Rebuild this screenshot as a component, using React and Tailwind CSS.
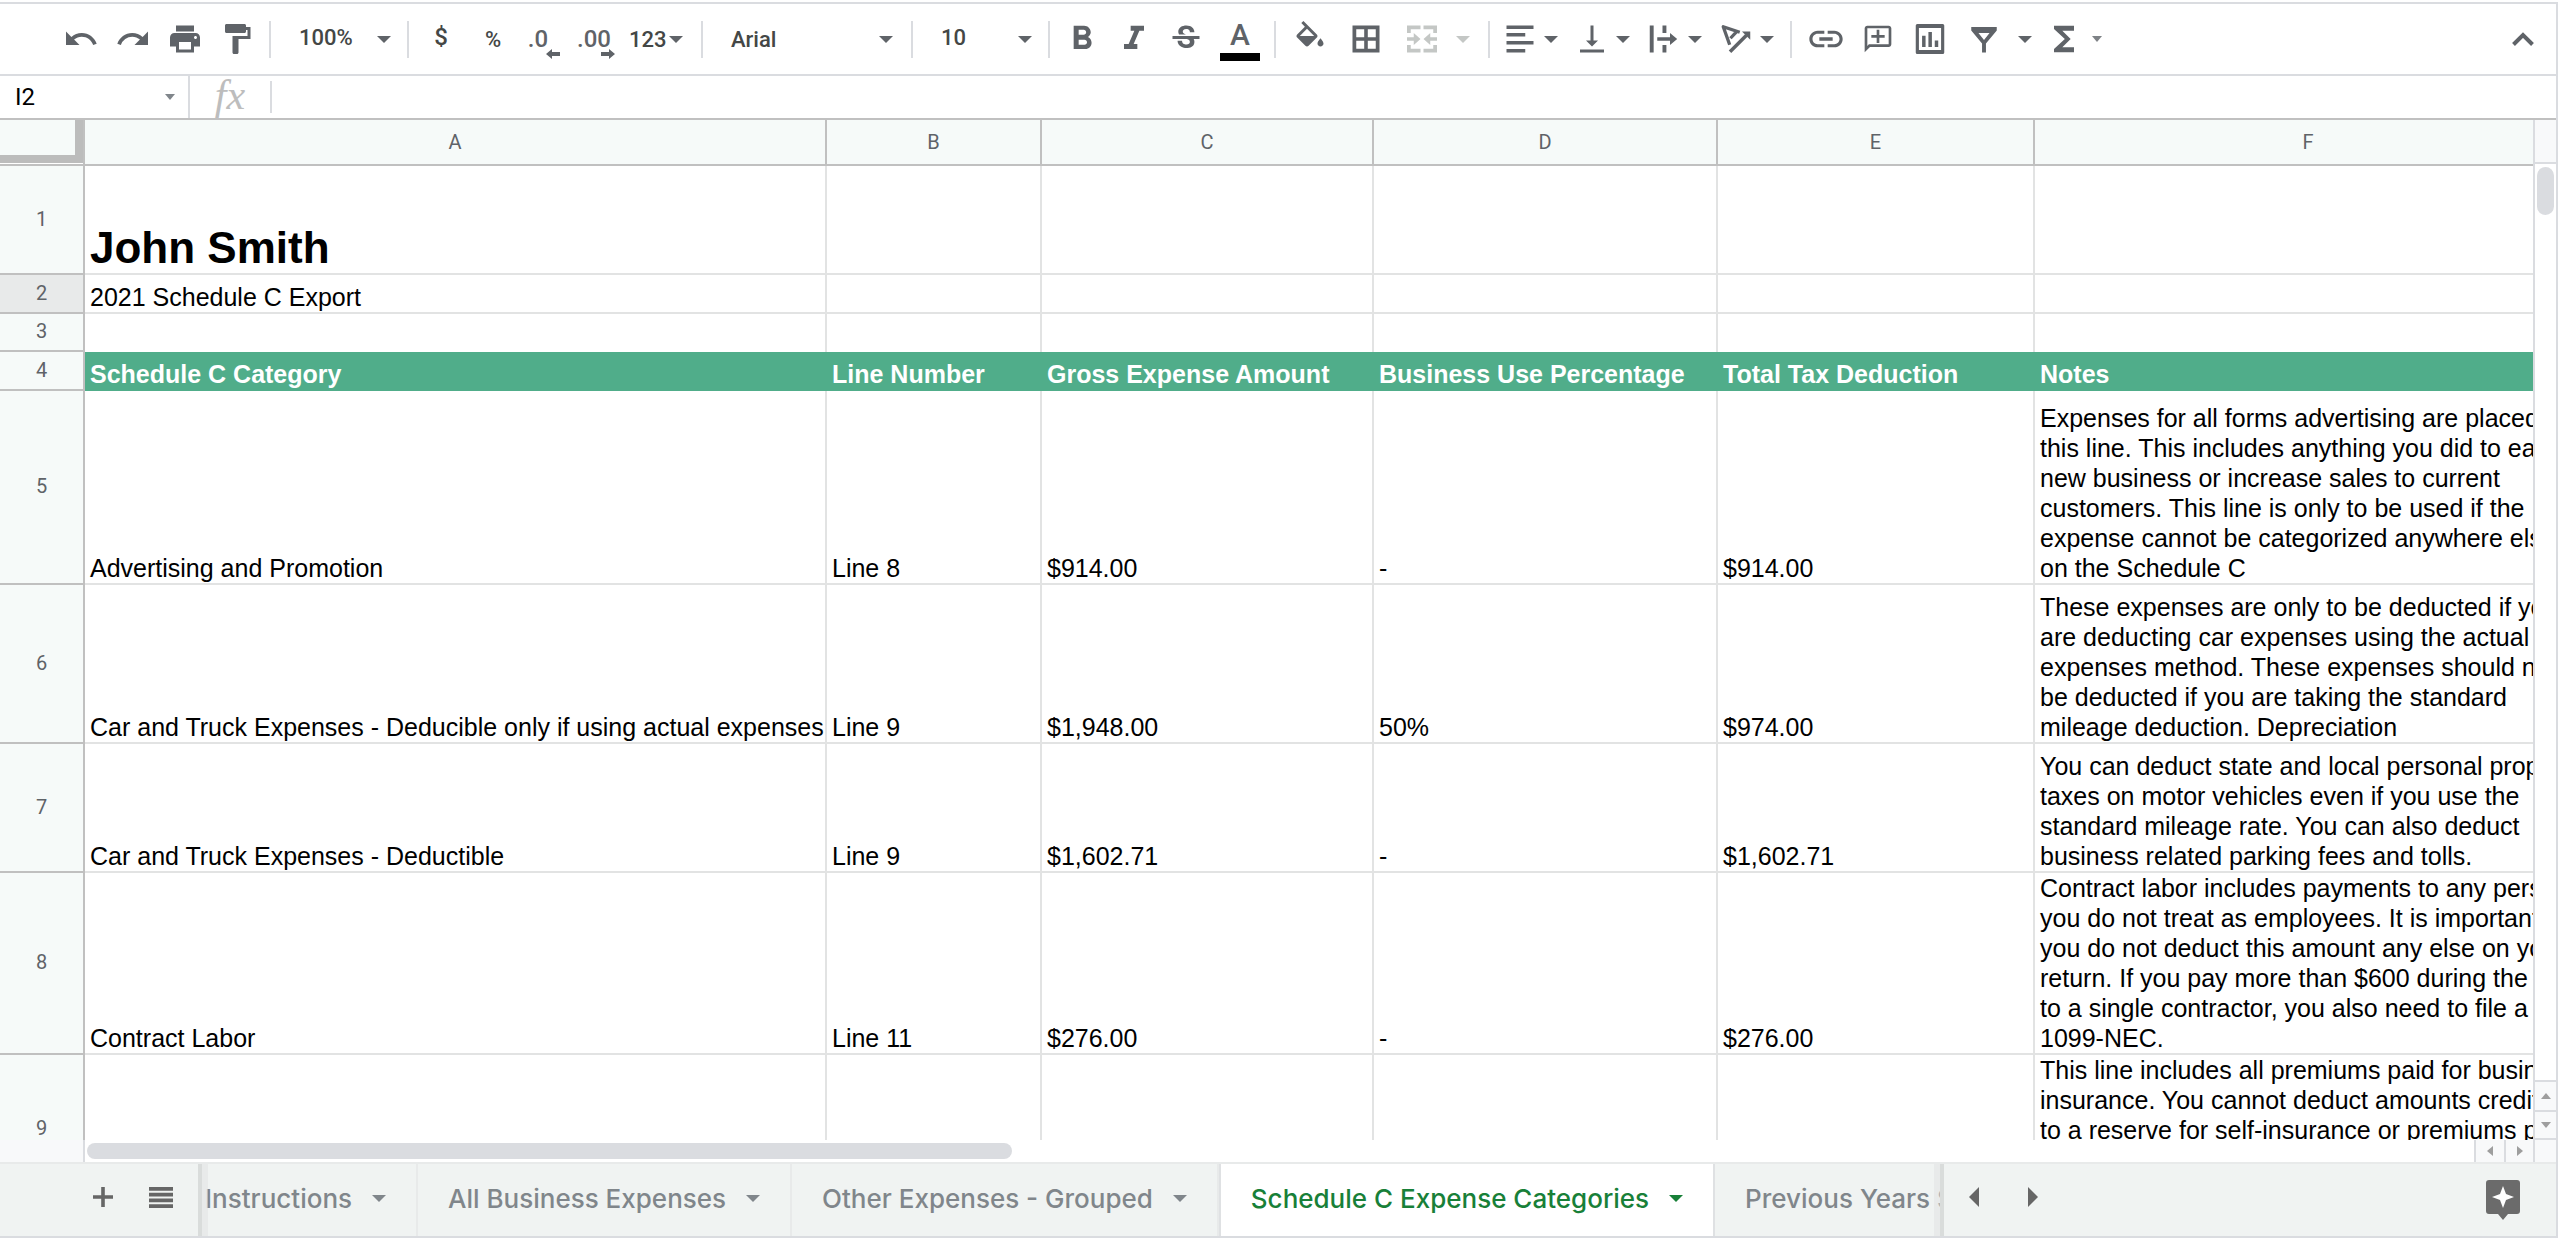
import React from 'react';
import {
    MdUndo,
    MdRedo,
    MdPrint,
    MdFormatPaint,
    MdFormatBold,
    MdFormatItalic,
    MdStrikethroughS,
    MdVerticalAlignBottom,
    MdLink,
    MdOutlineAddComment,
    MdFunctions,
} from 'react-icons/md';

const columns = ['A', 'B', 'C', 'D', 'E', 'F'];

const expenses = [
    {
        row: 5,
        height: 'h-[194px]',
        category: 'Advertising and Promotion',
        line: 'Line 8',
        gross: '$914.00',
        percent: '-',
        total: '$914.00',
        notes: 'Expenses for all forms advertising are placed on this line. This includes anything you did to earn new business or increase sales to current customers. This line is only to be used if the expense cannot be categorized anywhere else on the Schedule C',
    },
    {
        row: 6,
        height: 'h-[159px]',
        category: 'Car and Truck Expenses - Deducible only if using actual expenses',
        line: 'Line 9',
        gross: '$1,948.00',
        percent: '50%',
        total: '$974.00',
        notes: 'These expenses are only to be deducted if you are deducting car expenses using the actual expenses method. These expenses should not be deducted if you are taking the standard mileage deduction. Depreciation',
    },
    {
        row: 7,
        height: 'h-[129px]',
        category: 'Car and Truck Expenses - Deductible',
        line: 'Line 9',
        gross: '$1,602.71',
        percent: '-',
        total: '$1,602.71',
        notes: 'You can deduct state and local personal property taxes on motor vehicles even if you use the standard mileage rate. You can also deduct business related parking fees and tolls.',
    },
    {
        row: 8,
        height: 'h-[181px]',
        category: 'Contract Labor',
        line: 'Line 11',
        gross: '$276.00',
        percent: '-',
        total: '$276.00',
        notes: 'Contract labor includes payments to any persons you do not treat as employees. It is important that you do not deduct this amount any else on your return. If you pay more than $600 during the year to a single contractor, you also need to file a 1099-NEC.',
    },
    {
        row: 9,
        height: 'h-[150px]',
        category: '',
        line: '',
        gross: '',
        percent: '',
        total: '',
        notes: 'This line includes all premiums paid for business insurance. You cannot deduct amounts credited to a reserve for self-insurance or premiums paid',
    },
];

function Caret({ className = 'h-[7px] w-[14px]' }) {
    return (
        <svg viewBox="0 0 14 7" preserveAspectRatio="none" className={`shrink-0 fill-current ${className}`} aria-hidden="true">
            <path d="M0 0h14L7 7z" />
        </svg>
    );
}

function Divider() {
    return <div className="mx-1.5 h-[37px] w-0.5 shrink-0 bg-[#dadce0]" />;
}

function ToolButton({ label, className = 'w-[52px]', children }) {
    return (
        <button aria-label={label} className={`flex h-12 shrink-0 items-center justify-center ${className}`}>
            {children}
        </button>
    );
}

function MenuTool({ label, className = 'gap-1.5 pl-1.5 pr-2.5', children }) {
    return (
        <button aria-label={label} className={`flex h-12 shrink-0 items-center ${className}`}>
            {children}
            <Caret />
        </button>
    );
}

function Icon({ children, className = 'size-9' }) {
    return (
        <svg viewBox="0 0 24 24" className={`shrink-0 fill-current ${className}`} aria-hidden="true">
            {children}
        </svg>
    );
}

function DecimalArrow({ className }) {
    return (
        <svg viewBox="0 0 14 10" className={`absolute -bottom-1 h-2.5 w-3.5 fill-current ${className}`} aria-hidden="true">
            <path d="M0 5l6-5v3h8v4H6v3z" />
        </svg>
    );
}

function Toolbar() {
    return (
        <div className="flex h-[74px] shrink-0 items-center border-t-2 border-b-2 border-[#dadce0] pl-[55px] text-[#5f6368] font-['Roboto',sans-serif] text-[22px] font-medium">
            <ToolButton label="Undo"><MdUndo className="size-9" /></ToolButton>
            <ToolButton label="Redo"><MdRedo className="size-9" /></ToolButton>
            <ToolButton label="Print"><MdPrint className="size-9" /></ToolButton>
            <ToolButton label="Paint format"><MdFormatPaint className="size-9" /></ToolButton>
            <Divider />
            <MenuTool label="Zoom" className="w-[124px] justify-between pl-[22px] pr-2.5">
                <span className="pb-1 text-[#444746]">100%</span>
            </MenuTool>
            <Divider />
            <ToolButton label="Format as currency"><span className="pb-1 text-2xl text-[#444746]">$</span></ToolButton>
            <ToolButton label="Format as percent"><span className="text-[#444746]">%</span></ToolButton>
            <ToolButton label="Decrease decimal places">
                <span className="relative mr-3.5 text-2xl">.0<DecimalArrow className="-right-3" /></span>
            </ToolButton>
            <ToolButton label="Increase decimal places">
                <span className="relative mr-1.5 text-2xl">.00<DecimalArrow className="-right-1 rotate-180" /></span>
            </ToolButton>
            <MenuTool label="More formats" className="w-[72px] justify-between pl-1.5 pr-3">
                <span className="text-[#444746]">123</span>
            </MenuTool>
            <Divider />
            <MenuTool label="Font" className="w-[196px] justify-between pl-[22px] pr-3">
                <span className="text-[#444746]">Arial</span>
            </MenuTool>
            <Divider />
            <MenuTool label="Font size" className="w-[123px] justify-between pl-[22px] pr-2.5">
                <span className="pb-1 text-[#444746]">10</span>
            </MenuTool>
            <Divider />
            <ToolButton label="Bold"><MdFormatBold className="size-10" /></ToolButton>
            <ToolButton label="Italic"><MdFormatItalic className="size-10" /></ToolButton>
            <ToolButton label="Strikethrough"><MdStrikethroughS className="size-9" /></ToolButton>
            <ToolButton label="Text color" className="w-14">
                <span className="flex w-10 justify-center border-b-8 border-black text-[30px] leading-9">A</span>
            </ToolButton>
            <Divider />
            <ToolButton label="Fill color" className="w-14">
                <Icon>
                    <path d="M16.56 8.94L7.62 0 6.21 1.41l2.38 2.38-5.15 5.15c-.59.59-.59 1.54 0 2.12l5.5 5.5c.29.29.68.44 1.06.44s.77-.15 1.06-.44l5.5-5.5c.59-.58.59-1.53 0-2.12zM5.21 10L10 5.21 14.79 10H5.21zM19 11.5s-2 2.17-2 3.5c0 1.1.9 2 2 2s2-.9 2-2c0-1.33-2-3.5-2-3.5z" />
                </Icon>
            </ToolButton>
            <ToolButton label="Borders" className="w-14">
                <Icon><path fillRule="evenodd" d="M3 3h18v18H3zM5.500 5.500v5.300h5.300V5.500zM13.200 5.500v5.300h5.300V5.500zM5.500 13.200v5.300h5.300v-5.300zM13.200 13.200v5.300h5.300v-5.300z" /></Icon>
            </ToolButton>
            <MenuTool label="Merge cells" className="gap-4 pl-2.5 pr-3 text-[#c4c7c5]">
                <Icon>
                    <path d="M2 3h9v2.500H4.500V8H2zM13 3h9v5h-2.500V5.500H13zM2 16h2.500v2.500H11V21H2zM19.500 16H22v5h-9v-2.500h6.500zM2 10.800h4.500V8l4.500 4-4.500 4v-2.800H2zM22 10.800h-4.500V8L13 12l4.500 4v-2.800H22z" />
                </Icon>
            </MenuTool>
            <Divider />
            <MenuTool label="Horizontal align">
                <Icon><path d="M3 3h18v2.300H3zM3 8h12.500v2.300H3zM3 13.300h18v2.300H3zM3 18.700h12.500V21H3z" /></Icon>
            </MenuTool>
            <MenuTool label="Vertical align"><MdVerticalAlignBottom className="size-9" /></MenuTool>
            <MenuTool label="Text wrapping">
                <Icon><path d="M2.500 3h2.600v18H2.500zM11 3h2.600v5H11zM11 16h2.600v5H11zM7.500 10.800H16V8l4.800 4-4.800 4v-2.800H7.500z" /></Icon>
            </MenuTool>
            <MenuTool label="Text rotation">
                <Icon>
                    <path d="M14.500 7.500L3.500 3.800l4.300 12M8.300 11.500l4-4.300" fill="none" stroke="currentColor" strokeWidth="2.200" strokeLinejoin="round" />
                    <path d="M8 20.500L19 9.500" fill="none" stroke="currentColor" strokeWidth="2.400" />
                    <path d="M16 7h5.500v5.500z" />
                </Icon>
            </MenuTool>
            <Divider />
            <ToolButton label="Insert link" className="ml-0.5 w-[52px]"><MdLink className="size-10" /></ToolButton>
            <ToolButton label="Insert comment"><MdOutlineAddComment className="size-8 -scale-x-100" /></ToolButton>
            <ToolButton label="Insert chart">
                <Icon className="size-[38px]">
                    <path fillRule="evenodd" d="M4 2.500h16a1 1 0 011 1v17a1 1 0 01-1 1H4a1 1 0 01-1-1v-17a1 1 0 011-1zM5 5v14h14V5zM7 10h2.200v7H7zM11 7.500h2.200V17H11zM15 13h2.200v4H15z" />
                </Icon>
            </ToolButton>
            <MenuTool label="Filter" className="gap-4 pl-2.5 pr-1.5">
                <Icon><path d="M3.500 4h17v2.300L13.300 15v6h-2.600v-6L3.500 6.300zM8.300 8l3.700 4.600L15.700 8z" fillRule="evenodd" /></Icon>
            </MenuTool>
            <button aria-label="Functions" className="flex h-12 items-center gap-2 pl-1.5">
                <MdFunctions className="size-10" />
                <Caret className="h-[6px] w-[10px] opacity-80" />
            </button>
            <button aria-label="Hide the menus" className="mr-[22px] ml-auto">
                <svg viewBox="0 0 22 14" className="h-3.5 w-[22px] fill-none stroke-current" strokeWidth="4" aria-hidden="true"><path d="M1.500 12.500L11 3l9.500 9.500" /></svg>
            </button>
        </div>
    );
}

function FormulaBar() {
    return (
        <div className="flex h-[42px] shrink-0 items-center">
            <label htmlFor="cell-name" className="sr-only">Name box</label>
            <input
                id="cell-name"
                defaultValue="I2"
                className="w-[152px] pl-[15px] font-['Roboto',sans-serif] text-2xl text-black outline-none"
            />
            <button aria-label="Named ranges" className="flex w-9 justify-center text-[#80868b]">
                <Caret className="h-[6px] w-[10px]" />
            </button>
            <div className="h-full w-0.5 bg-[#dadce0]" />
            <label htmlFor="formula" className="w-20 pb-1 text-center font-['Liberation_Serif',serif] text-[42px] leading-9 text-[#bdbdbd] italic">fx</label>
            <div className="h-8 w-0.5 bg-[#dadce0]" />
            <input id="formula" className="min-w-0 flex-1 px-3 font-['Roboto',sans-serif] text-2xl outline-none" />
        </div>
    );
}

const headCell = "border-r-2 border-b-2 border-[#c0c0c0] font-['Roboto',sans-serif] text-xl font-normal text-[#5f6368]";
const cell = 'border-r-2 border-b-2 border-[#e2e3e3] pl-[5px] align-bottom whitespace-nowrap';
const greenCell = 'border-b-2 border-[#50ad8a] bg-[#50ad8a] pl-[5px] align-bottom text-left font-bold whitespace-nowrap text-white';

function RowHeader({ number, selected }) {
    return (
        <th scope="row" className={`${headCell} pb-0.5 ${selected ? 'bg-[#e8eaea]' : 'bg-[#f6faf9]'}`}>
            {number}
        </th>
    );
}

function EmptyCells({ className = cell }) {
    return columns.slice(1).map((name) => <td key={name} className={className} />);
}

function Sheet() {
    return (
        <table className="w-[2591px] table-fixed border-separate border-spacing-0 font-['Liberation_Sans',Arial,sans-serif] text-[25px] leading-[30px] text-black">
            <colgroup>
                <col className="w-[85px]" />
                <col className="w-[742px]" />
                <col className="w-[215px]" />
                <col className="w-[332px]" />
                <col className="w-[344px]" />
                <col className="w-[317px]" />
                <col className="w-[556px]" />
            </colgroup>
            <thead>
                <tr className="h-[46px]">
                    <td className="border-r-2 border-b-2 border-[#c0c0c0] p-0 align-top">
                        <div className="h-[43px] border-r-8 border-b-8 border-[#bcbcbc] bg-[#f6faf9]" />
                    </td>
                    {columns.map((name) => (
                        <th key={name} scope="col" className={`${headCell} bg-[#f6faf9] ${name === 'F' ? 'pr-2' : ''}`}>{name}</th>
                    ))}
                </tr>
            </thead>
            <tbody>
                <tr className="h-[109px]">
                    <RowHeader number={1} />
                    <td className={`${cell} text-[44px] leading-[50px] font-bold`}>John Smith</td>
                    <EmptyCells />
                </tr>
                <tr className="h-[39px]">
                    <RowHeader number={2} selected />
                    <td className={cell}>2021 Schedule C Export</td>
                    <EmptyCells />
                </tr>
                <tr className="h-[38px]">
                    <RowHeader number={3} />
                    <td className="border-r-2 border-[#e2e3e3]" />
                    <EmptyCells className="border-r-2 border-[#e2e3e3]" />
                </tr>
                <tr className="h-[39px]">
                    <RowHeader number={4} />
                    <th scope="col" className={greenCell}>Schedule C Category</th>
                    <th scope="col" className={greenCell}>Line Number</th>
                    <th scope="col" className={greenCell}>Gross Expense Amount</th>
                    <th scope="col" className={greenCell}>Business Use Percentage</th>
                    <th scope="col" className={greenCell}>Total Tax Deduction</th>
                    <th scope="col" className={greenCell}>Notes</th>
                </tr>
                {expenses.map((item) => (
                    <tr key={item.row} className={item.height}>
                        <RowHeader number={item.row} />
                        <td className={cell}>{item.category}</td>
                        <td className={cell}>{item.line}</td>
                        <td className={cell}>{item.gross}</td>
                        <td className={cell}>{item.percent}</td>
                        <td className={cell}>{item.total}</td>
                        <td className={`border-r-2 border-b-2 border-[#e2e3e3] pl-[5px] ${item.row === 9 ? 'align-top' : 'align-bottom'}`}>{item.notes}</td>
                    </tr>
                ))}
            </tbody>
        </table>
    );
}

const scrollButton = 'flex items-center justify-center bg-[#f8f9fa] text-[#9e9e9e] border-[#dadce0]';

function SheetArea() {
    return (
        <div className="flex min-h-0 flex-1 flex-col border-t-2 border-[#c0c0c0]">
            <div className="flex min-h-0 flex-1">
                <div className="min-w-0 flex-1 overflow-hidden">
                    <Sheet />
                </div>
                <div className="flex w-[23px] shrink-0 flex-col border-l-2 border-[#dadce0]">
                    <div className="h-[44px] border-b-2 border-[#dadce0] bg-[#f8f9fa]" />
                    <div className="mx-0.5 mt-[3px] h-12 rounded-full bg-[#dadce0]" />
                    <button aria-label="Scroll up" className={`mt-auto h-[30px] border-t-2 ${scrollButton}`}>
                        <Caret className="h-[6px] w-[10px] rotate-180" />
                    </button>
                    <button aria-label="Scroll down" className={`h-[30px] border-y-2 ${scrollButton}`}>
                        <Caret className="h-[6px] w-[10px]" />
                    </button>
                </div>
            </div>
            <div className="flex h-[22px] shrink-0">
                <div className="w-[85px] border-r-2 border-[#dadce0] bg-[#f8f9fa]" />
                <div className="flex flex-1 items-center pl-0.5">
                    <div className="h-4 w-[925px] rounded-full bg-[#dadce0]" />
                </div>
                <button aria-label="Scroll left" className={`w-[30px] border-l-2 ${scrollButton}`}>
                    <Caret className="h-[6px] w-[10px] rotate-90" />
                </button>
                <button aria-label="Scroll right" className={`w-[29px] border-l-2 ${scrollButton}`}>
                    <Caret className="h-[6px] w-[10px] -rotate-90" />
                </button>
                <div className="w-[23px] border-l-2 border-[#dadce0] bg-[#f8f9fa]" />
            </div>
        </div>
    );
}

function Tab({ name, active, className = 'px-[30px]' }) {
    return (
        <button
            className={`flex h-full shrink-0 items-center gap-5 pb-1 whitespace-nowrap ${className} ${
                active
                    ? 'border-x-2 border-[#dfe1e3] bg-white text-[#188038]'
                    : 'border-r-2 border-[#e8eaea] text-[#80868b]'
            }`}
        >
            {name}
            <Caret />
        </button>
    );
}

function TabBar() {
    return (
        <div className="flex h-[76px] shrink-0 items-center border-t-2 border-b-2 border-t-[#e8eaea] border-b-[#dadce0] bg-[#f0f3f2] text-[#666]">
            <button aria-label="Add sheet" className="ml-[87px] flex w-8 justify-center pb-1.5">
                <svg viewBox="0 0 20 20" className="size-5 fill-current" aria-hidden="true">
                    <path d="M8.200 0h3.600v8.200H20v3.600h-8.200V20H8.200v-8.200H0V8.200h8.200z" />
                </svg>
            </button>
            <button aria-label="All sheets" className="ml-[30px] pb-1.5">
                <svg viewBox="0 0 24 21" className="h-[21px] w-6 fill-current" aria-hidden="true">
                    <path d="M0 0h24v3.800H0zM0 5.700h24v3.800H0zM0 11.400h24v3.800H0zM0 17.200h24V21H0z" />
                </svg>
            </button>
            <div className="relative ml-[25px] flex h-full w-[1746px] min-w-0 shrink overflow-hidden border-x-4 border-[#d9dcdb] font-['Inter',sans-serif] text-[26px] font-medium">
                <Tab name="Instructions" className="pr-[30px] pl-[3px]" />
                <Tab name="All Business Expenses" />
                <Tab name="Other Expenses - Grouped" />
                <Tab name="Schedule C Expense Categories" active />
                <Tab name="Previous Years Schedule C" />
                <div className="absolute inset-y-0 left-0 w-1.5 bg-[#dfe2e1]/50" />
                <div className="absolute inset-y-0 right-0 w-1.5 bg-[#dfe2e1]/50" />
            </div>
            <button aria-label="Scroll tabs left" className="flex w-[60px] justify-center pb-1.5">
                <svg viewBox="0 0 10 20" className="h-5 w-2.5 fill-current" aria-hidden="true"><path d="M10 0v20L0 10z" /></svg>
            </button>
            <button aria-label="Scroll tabs right" className="flex w-[58px] justify-center pb-1.5">
                <svg viewBox="0 0 10 20" className="h-5 w-2.5 fill-current" aria-hidden="true"><path d="M0 0v20l10-10z" /></svg>
            </button>
            <button aria-label="Explore" className="mr-9 ml-auto">
                <svg viewBox="0 0 34 40" className="h-10 w-[34px]" aria-hidden="true">
                    <path d="M3 0h28a3 3 0 013 3v28a3 3 0 01-3 3h-9l-5 6-5-6H3a3 3 0 01-3-3V3a3 3 0 013-3z" fill="#6b6b6b" />
                    <path d="M17 6l3 8 8 3-8 3-3 8-3-8-8-3 8-3z" fill="#fff" />
                </svg>
            </button>
        </div>
    );
}

export default function App() {
    return (
        <div className="flex h-screen flex-col overflow-hidden bg-white pt-0.5 pr-0.5">
            <div className="flex min-h-0 flex-1 flex-col border-r-2 border-[#dadce0]">
                <Toolbar />
                <FormulaBar />
                <SheetArea />
                <TabBar />
            </div>
        </div>
    );
}
